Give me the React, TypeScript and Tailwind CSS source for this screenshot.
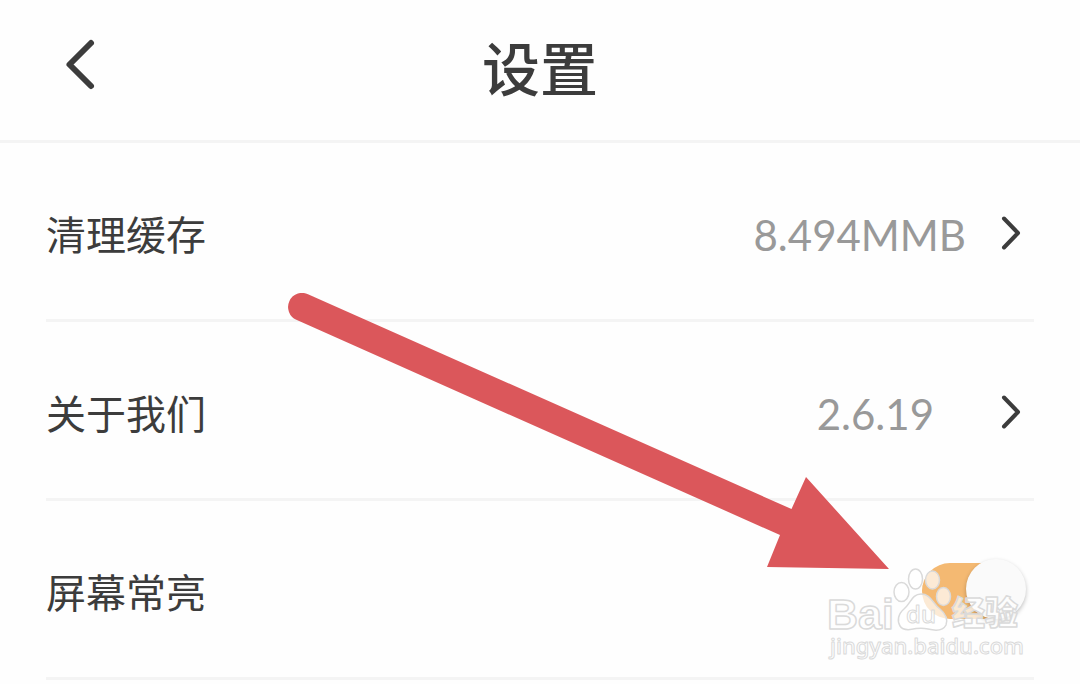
import { useState } from "react";

function Chevron() {
  return (
    <svg className="h-10 w-6 shrink-0" viewBox="0 0 24 40" fill="none" aria-hidden="true">
      <path d="M6 5.500 20 20 6 34.500" stroke="#3c3c3c" strokeWidth="4" strokeLinecap="round" strokeLinejoin="round" />
    </svg>
  );
}

function LinkRow({ label, value, valueClass }: { label: string; value: string; valueClass: string }) {
  return (
    <li className="border-b-[3px] border-[#f4f4f4]">
      <a href="#" className="flex h-44 items-center pt-[3px] pr-3">
        <span className="grow text-[40px] leading-[60px]">{label}</span>
        <span className={"font-[Lato,sans-serif] pt-1 text-[42px] leading-[60px] text-[#999999] " + valueClass}>{value}</span>
        <Chevron />
      </a>
    </li>
  );
}

function ToggleRow({ label }: { label: string }) {
  const [on, setOn] = useState(true);
  return (
    <li className="border-b-[3px] border-[#f4f4f4]">
      <label className="flex h-44 items-center justify-between pt-[3px] pr-2">
        <span className="text-[40px] leading-[60px]">{label}</span>
        <span className="relative flex h-14 w-26 rounded-full">
          <input
            type="checkbox"
            checked={on}
            onChange={() => setOn(!on)}
            className="peer h-14 w-25 appearance-none rounded-full bg-gray-300 checked:bg-[#f4b972]"
          />
          <span className="pointer-events-none absolute -top-1 left-0 size-15 rounded-full bg-[#fafafa] shadow-[0px_2px_4px_rgba(0,0,0,0.25)] peer-checked:left-11" />
        </span>
      </label>
    </li>
  );
}

function Arrow() {
  return (
    <svg className="pointer-events-none absolute top-[293px] left-[288px] h-[277px] w-[602px]" viewBox="288 293 602 277" aria-hidden="true">
      <path
        d="M308 294.200 791.500 509 806 477 889 569 767 567 780 535 296.300 319.800A14 14 0 0 1 308 294.200Z"
        fill="#db575b"
      />
    </svg>
  );
}

function Watermark() {
  return (
    <svg
      className="pointer-events-none absolute top-[560px] left-[820px] h-[110px] w-[210px]"
      viewBox="820 560 210 110"
      role="img"
      aria-label="Baidu 经验"
    >
      <g fill="#ffffff" fillOpacity="0.7" stroke="#dadada" strokeWidth="1.500" strokeLinejoin="round">
        <text className="font-['Liberation_Sans',sans-serif]" x="827" y="629" fontSize="43" fontWeight="700">Bai</text>
        <ellipse cx="901.500" cy="592" rx="7.500" ry="9.500" />
        <ellipse cx="915.500" cy="579" rx="7" ry="10" />
        <ellipse cx="932.500" cy="580" rx="7" ry="9" />
        <ellipse cx="943.500" cy="596.500" rx="7" ry="9" />
        <path d="M921 594C912 594 911 603 904 609C898 614 897 621 900 626C903 631 910 630 916 628.500C920 628 924 628 928 629C936 631 943 631 946 625C948 619 946 614 940 609C932 603 931 594 921 594Z" />
        <text className="font-['Noto_Sans',sans-serif]" x="906" y="623" fontSize="24" fontWeight="500" strokeWidth="1">du</text>
        <text className="font-['Noto_Sans_CJK_SC',sans-serif]" x="952" y="625" fontSize="33" fontWeight="900">经验</text>
        <text className="font-['Noto_Sans',sans-serif]" x="830" y="654" fontSize="22" fontWeight="500" strokeWidth="1">jingyan.baidu.com</text>
      </g>
    </svg>
  );
}

export default function App() {
  return (
    <div className="relative min-h-screen overflow-hidden bg-[#fefefe] font-['Noto_Sans_CJK_SC',sans-serif] text-[#3c3c3c]">
      <header className="grid h-[143px] grid-cols-[1fr_auto_1fr] items-center border-b-[3px] border-[#f4f4f4] px-14">
        <button type="button" aria-label="返回" className="mb-3 flex size-14 items-center">
          <svg className="h-14 w-12" viewBox="0 0 48 56" fill="none" aria-hidden="true">
            <path d="M35 7 13.500 28.500 35 50" stroke="#3c3c3c" strokeWidth="6" strokeLinecap="round" strokeLinejoin="round" />
          </svg>
        </button>
        <h1 className="mb-2 text-[58px] leading-[80px] font-medium">设置</h1>
      </header>
      <main className="px-[46px]">
        <ul>
          <LinkRow label="清理缓存" value="8.494MMB" valueClass="mr-8" />
          <LinkRow label="关于我们" value="2.6.19" valueClass="mr-16" />
          <ToggleRow label="屏幕常亮" />
        </ul>
      </main>
      <Arrow />
      <Watermark />
    </div>
  );
}
